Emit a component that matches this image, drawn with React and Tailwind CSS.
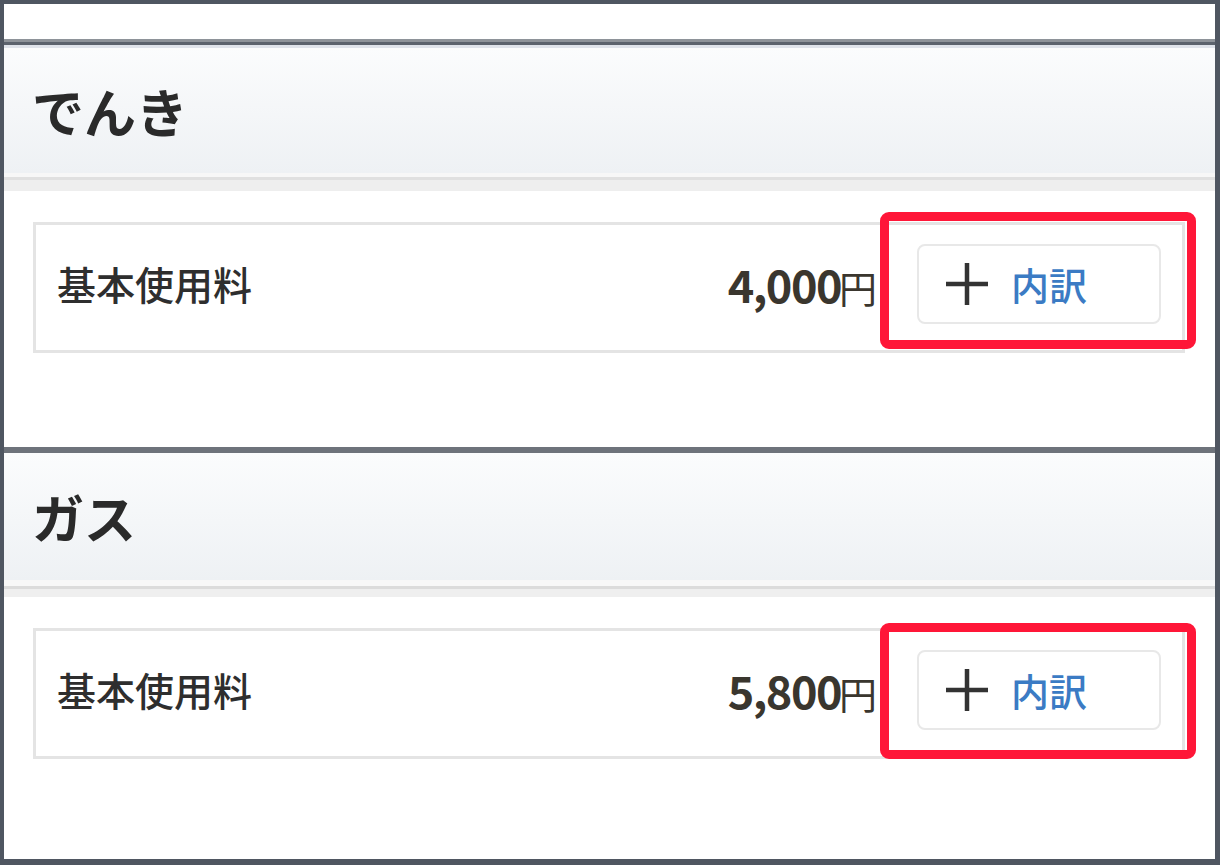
import React from "react";

const font = { fontFamily: '"Noto Sans CJK JP", "Noto Sans", sans-serif' };

const PlusIcon = () => (
  <svg width="44" height="44" viewBox="0 0 44 44" className="shrink-0">
    <path d="M22 1v42M1 22h42" stroke="#333333" strokeWidth="4.5" fill="none" />
  </svg>
);

const Row = ({ label, amount, first }) => (
  <div className="relative flex items-center h-[131px] pb-[8px] border-[3px] border-[#e4e4e4] bg-white">
    <div className="flex-1 pl-[21px] text-[39px] font-medium text-[#2e2e2e] leading-none">
      {label}
    </div>
    <div className="flex items-baseline text-[#3a362e] leading-none">
      <span className="text-[45px] font-bold tracking-[-1.5px]">{amount}</span>
      <span className="text-[38px] ml-[-2px]">円</span>
    </div>
    <button className="ml-[40px] mr-[21px] w-[244px] h-[80px] flex items-center pl-[26px] border-2 border-[#e8e8e8] rounded-[8px] bg-white">
      <PlusIcon />
      <span className="ml-[22px] text-[38px] font-medium text-[#3b7bc4] leading-none">内訳</span>
    </button>
    {/* annotation box */}
    <div
      className={
        "absolute left-[844px] right-[-14px] border-[9px] border-[#ff1638] rounded-[9px] " +
        (first ? "top-[-13px] bottom-[1px]" : "top-[-8px] bottom-[-3px]")
      }
    />
  </div>
);

export default function App() {
  return (
    <div style={font} className="w-[1220px] h-[865px] bg-[#4f5661] pt-1 pl-1 pr-[5px] pb-[6px]">
      <div className="h-full bg-white flex flex-col overflow-hidden">
        <div className="h-[35px] shrink-0" />

        {/* でんき */}
        <div className="shrink-0">
          <div className="h-[3px] bg-[#8e9399]" />
          <div className="h-[3px] bg-[#5c636d]" />
          <div className="h-[3px] bg-[#dfe3ea]" />
          <div className="h-[125px] bg-gradient-to-b from-[#fbfcfd] to-[#eef1f4] flex items-center pl-[28px]">
            <h2 className="text-[52px] font-bold text-[#2a2a2a] leading-none">でんき</h2>
          </div>
          <div className="h-[4px] bg-[#f7f7f7]" />
          <div className="h-[3px] bg-[#e0e0e0]" />
          <div className="h-[11px] bg-[#eeeeee]" />
        </div>
        <div className="h-[256px] shrink-0 pt-[31px] pl-[29px] pr-[30px]">
          <Row label="基本使用料" amount="4,000" first />
        </div>

        {/* ガス */}
        <div className="shrink-0">
          <div className="h-[6px] bg-[#6e737b]" />
          <div className="h-[127px] bg-gradient-to-b from-[#fbfcfd] to-[#eef1f4] flex items-center pl-[28px]">
            <h2 className="text-[52px] font-bold text-[#2a2a2a] leading-none">ガス</h2>
          </div>
          <div className="h-[6px] bg-[#f8f8f8]" />
          <div className="h-[3px] bg-[#dcdcdc]" />
          <div className="h-[8px] bg-[#efefef]" />
        </div>
        <div className="flex-1 pt-[31px] pl-[29px] pr-[30px]">
          <Row label="基本使用料" amount="5,800" />
        </div>
      </div>
    </div>
  );
}
